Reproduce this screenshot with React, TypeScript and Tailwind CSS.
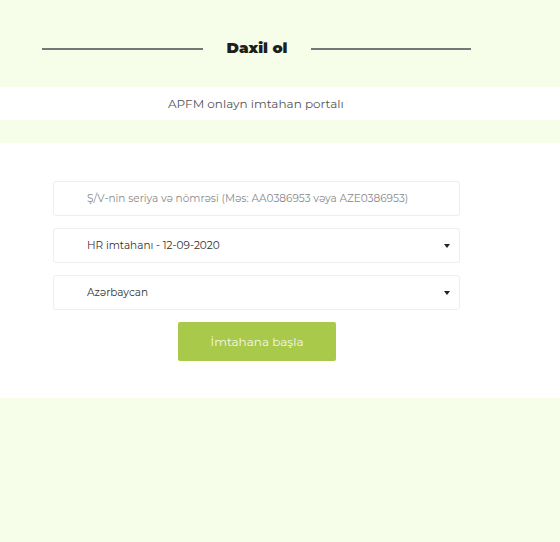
export default function App() {
  return (
    <div className="min-h-[542px] w-[560px] bg-[#f6fde8] font-['Montserrat','Noto_Sans',sans-serif]">
      {/* Heading */}
      <div className="flex h-[87px] items-center pl-[42px] pr-[89px] pt-[10px]">
        <div className="h-[2px] w-[161px] bg-[#777]" />
        <h1 className="flex-1 text-center text-[15px] font-black text-[#1e1e1e]">
          Daxil ol
        </h1>
        <div className="h-[2px] w-[160px] bg-[#777]" />
      </div>

      {/* Subtitle band */}
      <div className="flex h-[33px] items-center bg-white pl-[168px]">
        <span className="text-[12px] text-[#555]">APFM onlayn imtahan portalı</span>
      </div>

      <div className="h-[23px]" />

      {/* Form */}
      <div className="flex h-[255px] flex-col items-start bg-white pl-[53px] pt-[38px]">
        <div className="flex w-[407px] flex-col gap-[12px]">
          <div className="flex h-[35px] items-center rounded-[3px] border border-[#eeeeee] pl-[33px] text-[10.5px] text-[#8a8a8a]">
            Ş/V-nin seriya və nömrəsi (Məs: AA0386953 vəya AZE0386953)
          </div>
          <div className="flex h-[35px] items-center justify-between rounded-[3px] border border-[#eeeeee] pl-[33px] pr-[9px] text-[10.5px] text-[#333]">
            <span>HR imtahanı - 12-09-2020</span>
            <span className="h-0 w-0 border-x-[3.5px] border-t-[4px] border-x-transparent border-t-[#222]" />
          </div>
          <div className="flex h-[35px] items-center justify-between rounded-[3px] border border-[#eeeeee] pl-[33px] pr-[9px] text-[10.5px] text-[#333]">
            <span>Azərbaycan</span>
            <span className="h-0 w-0 border-x-[3.5px] border-t-[4px] border-x-transparent border-t-[#222]" />
          </div>
        </div>
        <button className="ml-[125px] mt-[12px] h-[39px] w-[158px] rounded-[2px] bg-[#a9c94b] text-[12px] text-[#f4f8e6]">
          İmtahana başla
        </button>
      </div>
    </div>
  );
}
